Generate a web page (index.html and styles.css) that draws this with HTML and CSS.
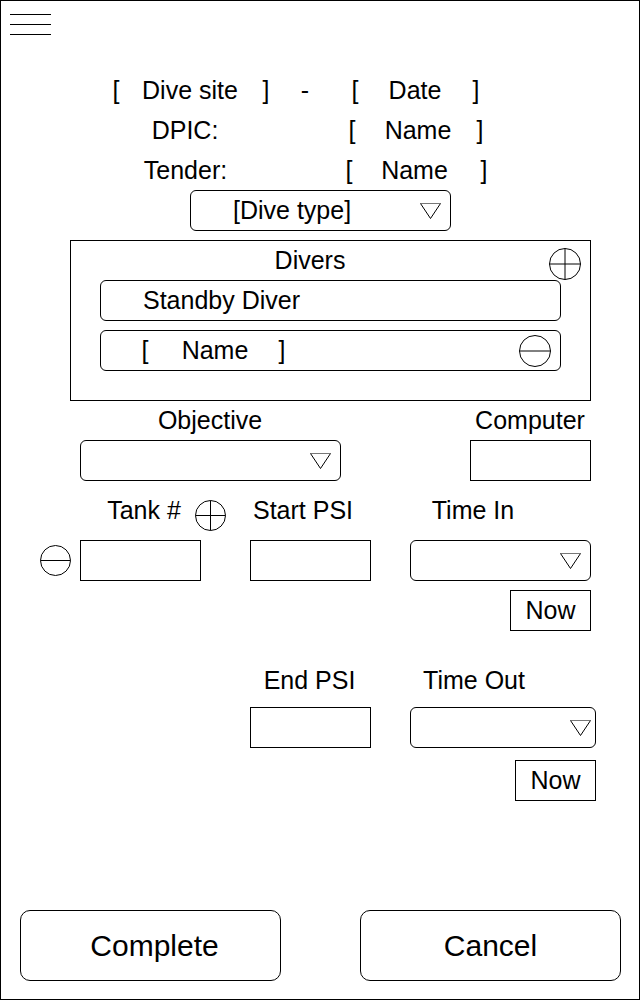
FILE: index.html
```html
<!DOCTYPE html>
<html lang="en">
<head>
<meta charset="utf-8">
<title>Dive Log</title>
<link rel="stylesheet" href="styles.css">
</head>
<body>
<div class="frame">
  <div class="menu"><span></span><span></span><span></span></div>

  <div class="head">
    <div class="hrow r1">
      <span>[</span><span>Dive site</span><span>]</span><span>-</span><span>[</span><span>Date</span><span>]</span>
    </div>
    <div class="hrow r2">
      <span class="lbl">DPIC:</span><span class="open">[</span><span class="nm">Name</span><span class="close">]</span>
    </div>
    <div class="hrow r3">
      <span class="lbl">Tender:</span><span class="open">[</span><span class="nm">Name</span><span class="close">]</span>
    </div>
  </div>

  <div class="select dive-type">
    <span class="sel-text">[Dive type]</span>
    <svg class="tri" width="21" height="16" viewBox="0 0 21 16"><path d="M0.5 0.5H20.5" stroke="#777" fill="none"/><path d="M0.5 0.5L10.5 15.5L20.5 0.5" stroke="#000" fill="none"/></svg>
  </div>

  <section class="divers">
    <div class="divers-head">
      <span class="divers-title">Divers</span>
      <svg class="circ add-diver" width="32" height="32" viewBox="0 0 32 32"><circle cx="16" cy="16" r="15.5" fill="none" stroke="#000"/><path d="M0.5 16H31.5M16 0.5V31.5" stroke="#000" fill="none"/></svg>
    </div>
    <div class="field standby">Standby Diver</div>
    <div class="field name-field">
      <span class="nf-open">[</span><span class="nf-name">Name</span><span class="nf-close">]</span>
      <svg class="circ rm-diver" width="32" height="32" viewBox="0 0 32 32"><circle cx="16" cy="16" r="15.5" fill="none" stroke="#000"/><path d="M0.5 16H31.5" stroke="#000" fill="none"/></svg>
    </div>
  </section>

  <div class="lrow obj-labels">
    <span class="l-obj">Objective</span>
    <span class="l-comp">Computer</span>
  </div>
  <div class="irow obj-inputs">
    <div class="select sel-obj">
      <svg class="tri" width="21" height="16" viewBox="0 0 21 16"><path d="M0.5 0.5H20.5" stroke="#777" fill="none"/><path d="M0.5 0.5L10.5 15.5L20.5 0.5" stroke="#000" fill="none"/></svg>
    </div>
    <div class="box box-comp"></div>
  </div>

  <div class="lrow tank-labels">
    <span class="l-tank">Tank #</span>
    <svg class="circ add-tank" width="31" height="31" viewBox="0 0 31 31"><circle cx="15.5" cy="15.5" r="15" fill="none" stroke="#000"/><path d="M0.5 15.5H30.5M15.5 0.5V30.5" stroke="#000" fill="none"/></svg>
    <span class="l-start">Start PSI</span>
    <span class="l-in">Time In</span>
  </div>
  <div class="irow tank-inputs">
    <svg class="circ rm-tank" width="31" height="31" viewBox="0 0 31 31"><circle cx="15.5" cy="15.5" r="15" fill="none" stroke="#000"/><path d="M0.5 15.5H30.5" stroke="#000" fill="none"/></svg>
    <div class="box box-tank"></div>
    <div class="box box-start"></div>
    <div class="select sel-in">
      <svg class="tri" width="21" height="16" viewBox="0 0 21 16"><path d="M0.5 0.5H20.5" stroke="#777" fill="none"/><path d="M0.5 0.5L10.5 15.5L20.5 0.5" stroke="#000" fill="none"/></svg>
    </div>
  </div>
  <div class="now now-in">Now</div>

  <div class="lrow end-labels">
    <span class="l-end">End PSI</span>
    <span class="l-out">Time Out</span>
  </div>
  <div class="irow end-inputs">
    <div class="box box-end"></div>
    <div class="select sel-out">
      <svg class="tri" width="21" height="16" viewBox="0 0 21 16"><path d="M0.5 0.5H20.5" stroke="#777" fill="none"/><path d="M0.5 0.5L10.5 15.5L20.5 0.5" stroke="#000" fill="none"/></svg>
    </div>
  </div>
  <div class="now now-out">Now</div>

  <div class="actions">
    <div class="btn btn-complete">Complete</div>
    <div class="btn btn-cancel">Cancel</div>
  </div>
</div>
</body>
</html>
```

FILE: styles.css
```css
html, body {
  margin: 0;
  padding: 0;
  background: #fff;
}

body {
  font-family: "Liberation Sans", Arial, Helvetica, sans-serif;
  font-size: 25px;
  color: #000;
}

.frame {
  box-sizing: border-box;
  width: 640px;
  height: 1000px;
  border: 1px solid #000;
  background: #fff;
  overflow: hidden;
}

/* hamburger */
.menu {
  display: flex;
  flex-direction: column;
  gap: 9px;
  padding: 13px 0 0 9px;
}
.menu span {
  display: block;
  width: 41px;
  height: 1px;
  background: #000;
}

/* header rows */
.head {
  margin-top: 35px;
}
.hrow {
  display: flex;
  align-items: center;
  height: 40px;
}
.hrow span {
  flex: none;
  text-align: center;
  white-space: pre;
}
.r1 {
  display: grid;
  grid-template-columns: 40px 108px 44px 34px 66px 54px 68px;
  align-items: center;
  padding-left: 95px;
}
.r2 { padding-left: 134px; }
.r2 .lbl { width: 100px; }
.r2 .open { width: 40px; margin-left: 97px; }
.r2 .nm { width: 92px; }
.r2 .close { width: 32px; }

.r3 { padding-left: 134px; }
.r3 .lbl { width: 101px; }
.r3 .open { width: 40px; margin-left: 93px; }
.r3 .nm { width: 91px; }
.r3 .close { width: 48px; }

/* shared controls */
.select {
  box-sizing: border-box;
  display: flex;
  align-items: center;
  height: 41px;
  border: 1px solid #000;
  border-radius: 6px;
  flex: none;
}
.select .tri {
  margin-left: auto;
  flex: none;
  display: block;
}
.box {
  box-sizing: border-box;
  height: 41px;
  border: 1px solid #000;
  flex: none;
}
.circ {
  display: block;
  flex: none;
}

.dive-type {
  width: 261px;
  margin-left: 189px;
  padding: 0 9px 0 42px;
}

/* divers */
.divers {
  box-sizing: border-box;
  width: 521px;
  height: 161px;
  margin: 9px 0 0 69px;
  border: 1px solid #000;
}
.divers-head {
  display: flex;
  height: 39px;
}
.divers-title {
  width: 100px;
  margin-left: 189px;
  text-align: center;
  line-height: 39px;
}
.add-diver {
  margin: 7px 0 0 189px;
}
.field {
  box-sizing: border-box;
  width: 461px;
  height: 41px;
  margin-left: 29px;
  border: 1px solid #000;
  border-radius: 6px;
  display: flex;
  align-items: center;
}
.standby {
  padding-left: 42px;
}
.name-field {
  margin-top: 9px;
}
.nf-open { width: 30px; margin-left: 29px; text-align: center; }
.nf-name { width: 110px; text-align: center; }
.nf-close { width: 24px; text-align: center; }
.rm-diver { margin-left: 225px; }

/* label + input rows */
.lrow {
  display: flex;
  align-items: center;
  height: 40px;
}
.lrow span {
  flex: none;
  text-align: center;
}
.irow {
  display: flex;
  align-items: center;
  height: 41px;
}

.obj-labels { height: 39px; }
.l-obj { width: 120px; margin-left: 149px; }
.l-comp { width: 120px; margin-left: 200px; }

.sel-obj { width: 261px; margin-left: 79px; padding-right: 9px; }
.box-comp { width: 121px; margin-left: 129px; }

.tank-labels { margin-top: 9px; }
.l-tank { width: 100px; margin-left: 93px; }
.add-tank { align-self: flex-start; margin-top: 10px; margin-left: 1px; }
.l-start { width: 120px; margin-left: 17px; }
.l-in { width: 120px; margin-left: 50px; }

.tank-inputs { margin-top: 10px; }
.rm-tank { margin-left: 39px; }
.box-tank { width: 121px; margin-left: 9px; }
.box-start { width: 121px; margin-left: 49px; }
.sel-in { width: 181px; margin-left: 39px; padding-right: 9px; }

.now {
  box-sizing: border-box;
  width: 81px;
  height: 41px;
  border: 1px solid #000;
  display: flex;
  align-items: center;
  justify-content: center;
}
.now-in { margin: 9px 0 0 509px; }

.end-labels { margin-top: 29px; }
.l-end { width: 121px; margin-left: 248px; }
.l-out { width: 120px; margin-left: 44px; }

.end-inputs { margin-top: 7px; }
.box-end { width: 121px; margin-left: 249px; }
.sel-out { width: 186px; margin-left: 39px; padding-right: 4px; }

.now-out { margin: 12px 0 0 514px; }

/* bottom buttons */
.actions {
  display: flex;
  margin-top: 109px;
}
.btn {
  box-sizing: border-box;
  width: 261px;
  height: 71px;
  border: 1px solid #000;
  border-radius: 10px;
  display: flex;
  align-items: center;
  justify-content: center;
  font-size: 30px;
  flex: none;
}
.btn-complete { margin-left: 19px; padding-left: 8px; }
.btn-cancel { margin-left: 79px; }
```
